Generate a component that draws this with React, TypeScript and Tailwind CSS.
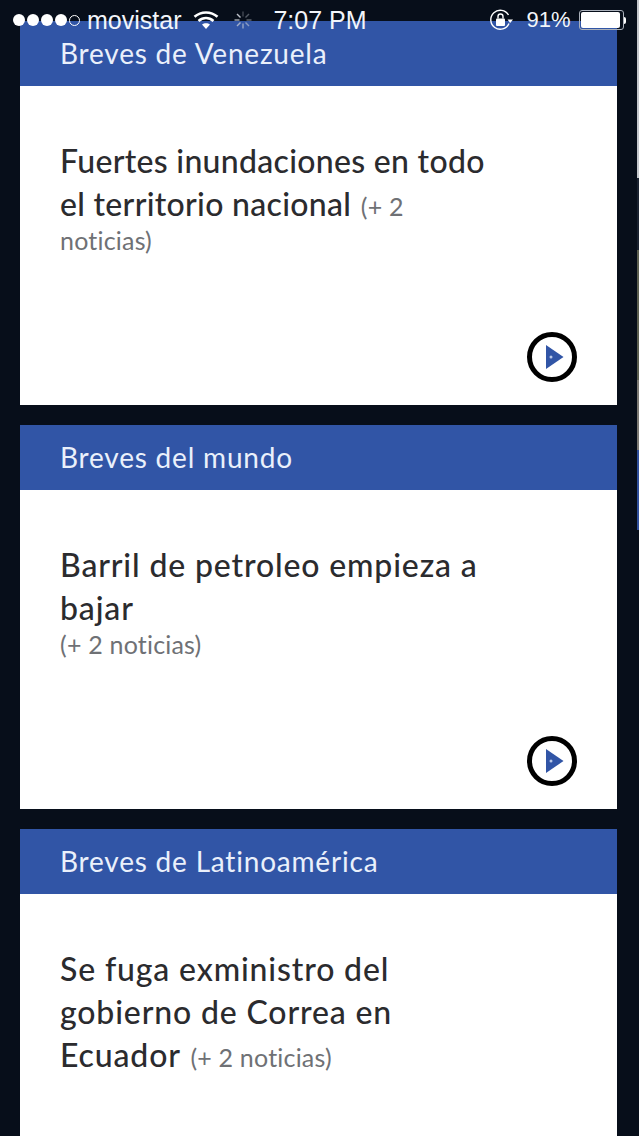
const cards = [
  {
    section: 'Breves de Venezuela',
    title: 'Fuertes inundaciones en todo el territorio nacional',
    titleClass: 'tracking-[0.3px]',
    more: '(+ 2 noticias)',
    inline: true,
  },
  {
    section: 'Breves del mundo',
    title: 'Barril de petroleo empieza a bajar',
    titleClass: 'tracking-[0.85px]',
    more: '(+ 2 noticias)',
    inline: false,
  },
  {
    section: 'Breves de Latinoamérica',
    title: 'Se fuga exministro del gobierno de Correa en Ecuador',
    titleClass: 'tracking-[0.85px]',
    more: '(+ 2 noticias)',
    inline: true,
  },
];

// sliver of the page behind, visible along the right edge
const edge = [
  { h: 'h-[178px]', bg: 'bg-[#c4c7cc]' },
  { h: 'h-[72px]', bg: 'bg-[#1a2230]' },
  { h: 'h-[130px]', bg: 'bg-[#5c5f50]' },
  { h: 'h-[70px]', bg: 'bg-[#7d7a74]' },
  { h: 'h-[80px]', bg: 'bg-[#2f4f9c]' },
];

function PlayButton() {
  return (
    <svg width="52" height="52" viewBox="0 0 52 52" className="absolute bottom-[22px] right-[39px]">
      <circle cx="26" cy="26" r="22.5" fill="#fff" stroke="#000" strokeWidth="5" />
      <path d="M20 14 L37.5 26 L20 38 Z" fill="#3155a6" />
      <circle cx="25" cy="26" r="1.5" fill="#b9c8e8" />
    </svg>
  );
}

function WifiIcon() {
  return (
    <svg width="26" height="20" viewBox="0 0 26 20" fill="none" stroke="#fff" strokeWidth="2.6">
      <path d="M1.5 6.8 C8 1 18 1 24.5 6.8" />
      <path d="M5.5 11 C10 7 16 7 20.5 11" />
      <path d="M13 19 L9 14.6 C11.3 12.8 14.7 12.8 17 14.6 Z" fill="#fff" stroke="none" />
    </svg>
  );
}

function Spinner() {
  const spokes = [0, 45, 90, 135, 180, 225, 270, 315];
  return (
    <svg width="20" height="20" viewBox="0 0 20 20" stroke="#c9ced6" strokeWidth="1.4">
      {spokes.map((a, i) => (
        <line key={a} x1="10" y1="1.5" x2="10" y2="6.5" opacity={0.3 + i * 0.09} transform={`rotate(${a} 10 10)`} />
      ))}
    </svg>
  );
}

// orientation lock: open ring with an arrow head on the right, padlock inside
function RotationLock() {
  return (
    <svg width="24" height="24" viewBox="0 0 24 24" fill="none">
      <path d="M20 15.5 A9.5 9.5 0 1 1 19.5 7" stroke="#fff" strokeWidth="1.4" />
      <path d="M18.5 11.5 H24 L21.2 15 Z" fill="#fff" />
      <rect x="7" y="10.5" width="9" height="7.5" rx="1" fill="#fff" />
      <path d="M9 10.5 V8.5 A2.5 2.5 0 0 1 14 8.5 V10.5" stroke="#fff" strokeWidth="1.4" />
    </svg>
  );
}

function StatusBar() {
  return (
    <div className="absolute left-0 right-0 top-0 flex h-[40px] items-center font-['Liberation_Sans',sans-serif] text-[25px] leading-none text-[#f2f5fa]">
      <div className="ml-[13px] flex items-center gap-[2px]">
        {[0, 1, 2, 3].map((d) => (
          <span key={d} className="h-[12px] w-[12px] rounded-full bg-white" />
        ))}
        <span className="h-[11px] w-[11px] rounded-full border border-white" />
      </div>
      <span className="ml-[7px]">movistar</span>
      <span className="ml-[12px] flex"><WifiIcon /></span>
      <span className="ml-[14px] flex"><Spinner /></span>
      <span className="ml-[20px] font-medium">7:07 PM</span>
      <span className="ml-[122px] flex"><RotationLock /></span>
      <span className="ml-[14px] text-[22px]">91%</span>
      <span className="ml-[8px] flex h-[20px] w-[45px] rounded-[3px] border border-[#aab0ba] p-[1px]">
        <span className="h-full w-[39px] rounded-[2px] bg-white" />
      </span>
      <span className="h-[7px] w-[2px] rounded-r-sm bg-white" />
    </div>
  );
}

export default function App() {
  return (
    <div className="relative h-[1136px] w-[639px] overflow-hidden bg-[#070e1a] font-['Lato',sans-serif]">
      <div className="flex flex-col gap-[20px] pl-[20px] pr-[22px] pt-[21px]">
        {cards.map((c) => (
          <section key={c.section} className="shrink-0">
            <h2 className="flex h-[65px] items-center bg-[#3155a6] pb-[2px] pl-[40px] text-[28px] tracking-[0.8px] text-[#eaf0fb]">
              {c.section}
            </h2>
            <div className="relative h-[319px] bg-white pl-[40px] pr-[117px] pt-[53px]">
              <p className="text-[25px] leading-[30px] tracking-[0.2px] text-[#6f7175]">
                <span className={`text-[32px] font-medium leading-[43px] text-[#2b2b2e] ${c.titleClass}`}>{c.title}</span>{' '}
                {c.inline ? <span className="ml-[3px]">{c.more}</span> : <span className="block">{c.more}</span>}
              </p>
              <PlayButton />
            </div>
          </section>
        ))}
      </div>
      <div className="absolute right-0 top-0 flex w-[2px] flex-col">
        {edge.map((s) => (
          <span key={s.bg} className={`w-full ${s.h} ${s.bg}`} />
        ))}
      </div>
      <StatusBar />
    </div>
  );
}
